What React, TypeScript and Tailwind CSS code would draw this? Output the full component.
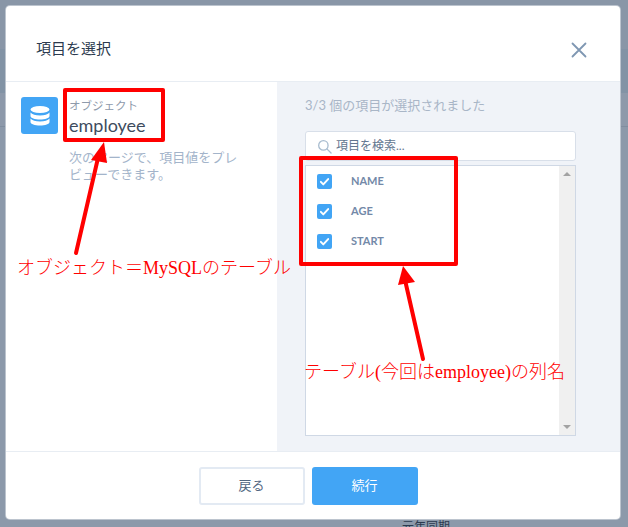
import React from "react";

const jp = "font-['Lato','Noto_Sans_CJK_JP',sans-serif]";

function Check() {
  return (
    <span className="flex h-[15px] w-[15px] shrink-0 items-center justify-center rounded-[2px] bg-[#42a5f5]">
      <svg viewBox="0 0 16 16" className="h-[13px] w-[13px]" fill="none" stroke="#fff" strokeWidth="2.4" strokeLinecap="round" strokeLinejoin="round">
        <path d="M3.5 8.5l3 3 6-6.5" />
      </svg>
    </span>
  );
}

function Row({ label }: { label: string }) {
  return (
    <div className="flex h-[30px] items-center pl-[11px]">
      <Check />
      <span className="ml-[19px] text-[11px] font-bold text-[#7389a8]">{label}</span>
    </div>
  );
}

export default function App() {
  return (
    <div className={`relative h-[527px] w-[628px] overflow-hidden bg-[linear-gradient(to_bottom,#8996a7_0,#8996a7_49px,#8293a5_49px,#8293a5_93px,#8d99aa_93px,#8d99aa_126px,#7f8d9f_126px,#7f8d9f_127px,#8c99aa_127px)] p-[6px] pb-[8px] ${jp}`}>
      <div className="flex h-[513px] w-[614px] flex-col overflow-hidden rounded-[4px] bg-white ring-1 ring-[#bcc4ce]">
        <header className="flex h-[76px] shrink-0 items-center justify-between border-b border-[#e8edf3] pl-[30px] pr-[33px] pt-[10px]">
          <h1 className="text-[15px] font-normal text-[#2b3a4e]">項目を選択</h1>
          <svg viewBox="0 0 16 16" className="mt-[3px] h-[16px] w-[16px]" fill="none" stroke="#7f97b2" strokeWidth="1.8" strokeLinecap="round">
            <path d="M1.5 1.5l13 13M14.5 1.5l-13 13" />
          </svg>
        </header>
        <main className="flex min-h-0 flex-1">
          <section className="flex w-[271px] shrink-0 pl-[15px] pt-[15px]">
            <div className="flex h-[37px] w-[37px] shrink-0 items-center justify-center rounded-[3px] bg-[#42a5f5]">
              <svg viewBox="0 0 24 24" className="h-[24px] w-[24px]" fill="#fff">
                <ellipse cx="12" cy="5.5" rx="9.5" ry="3.5" />
                <path d="M2.5 8.500c1.500 2 5 3 9.500 3s8-1 9.500-3v3.500c0 2-4.300 3.500-9.500 3.500S2.500 14 2.500 12z" />
                <path d="M2.500 14.500c1.500 2 5 3 9.500 3s8-1 9.500-3V18c0 2-4.300 3.500-9.500 3.500S2.500 20 2.500 18z" />
              </svg>
            </div>
            <div className="ml-[11px] w-[185px]">
              <div className="mt-[1px] text-[11.5px] leading-[16px] text-[#8e9aab]">オブジェクト</div>
              <div className="text-[18px] leading-[22px] text-[#3e4c5e]">employee</div>
              <p className="mt-[13px] w-[176px] text-[13px] leading-[17px] text-[#a3b4ca]">次のページで、項目値をプレビューできます。</p>
            </div>
          </section>
          <section className="flex flex-1 flex-col bg-[#f0f3f8] pl-[28px] pr-[44px]">
            <div className="mt-[14px] text-[13px] leading-[18px] text-[#a9b6c7]">3/3 個の項目が選択されました</div>
            <div className="mt-[17px] flex h-[30px] items-center rounded-[3px] border border-[#d8dfe9] bg-white pl-[11px]">
              <svg viewBox="0 0 16 16" className="h-[15px] w-[15px]" fill="none" stroke="#a8bccf" strokeWidth="1.4" strokeLinecap="round">
                <circle cx="6.800" cy="6.800" r="5" />
                <path d="M10.500 10.500l4.500 4.500" />
              </svg>
              <span className="ml-[4px] text-[12px] text-[#62768f]">項目を検索...</span>
            </div>
            <div className="mt-[4px] flex h-[271px] border border-[#cfd8e5] bg-white">
              <div className="flex-1">
                <Row label="NAME" />
                <Row label="AGE" />
                <Row label="START" />
              </div>
              <div className="flex w-[16px] flex-col items-center justify-between bg-[#f0f0f0] py-[6px]">
                <span className="h-0 w-0 border-x-[4px] border-b-[4px] border-x-transparent border-b-[#a3a3a3]" />
                <span className="h-0 w-0 border-x-[4px] border-t-[4px] border-x-transparent border-t-[#a3a3a3]" />
              </div>
            </div>
          </section>
        </main>
        <footer className="flex h-[68px] shrink-0 items-center justify-center gap-[7px] border-t border-[#e8edf3] pr-[10px]">
          <button className="h-[38px] w-[106px] rounded-[3px] border-2 border-[#e3eaf3] bg-white text-[13px] text-[#52667f]">戻る</button>
          <button className="h-[38px] w-[106px] rounded-[3px] bg-[#42a5f5] text-[13px] text-white">続行</button>
        </footer>
      </div>

      {/* Text of the page behind the dialog, showing below it */}
      <div className="absolute left-[402px] top-[519px] text-[12px] leading-[16px] text-[#2b3a4e]">元年同期</div>

      {/* Red annotations over the screenshot */}
      <div className="absolute left-[63px] top-[88px] h-[54px] w-[102px] rounded-[2px] border-[4px] border-[#ff0000]" />
      <div className="absolute left-[299px] top-[156px] h-[110px] w-[159px] rounded-[2px] border-[4px] border-[#ff0000]" />
      <svg className="absolute left-0 top-0" width="628" height="527" fill="none">
        <path d="M76 253L98 158" stroke="#ff0000" strokeWidth="4" strokeLinecap="round" />
        <path d="M104 142L91 160L107 163Z" fill="#ff0000" />
        <path d="M423 359L405 280" stroke="#ff0000" strokeWidth="4" strokeLinecap="round" />
        <path d="M403 266L398 285L415 282Z" fill="#ff0000" />
      </svg>
      <div className="absolute left-[17px] top-[256px] whitespace-nowrap font-['Liberation_Serif','Noto_Sans_CJK_JP',serif] text-[18px] font-light leading-[24px] text-[#ff0000]">オブジェクト＝MySQLのテーブル</div>
      <div className="absolute left-[304px] top-[360px] whitespace-nowrap font-['Liberation_Serif','Noto_Sans_CJK_JP',serif] text-[18px] font-light leading-[24px] text-[#ff0000]">テーブル(今回はemployee)の列名</div>
    </div>
  );
}
